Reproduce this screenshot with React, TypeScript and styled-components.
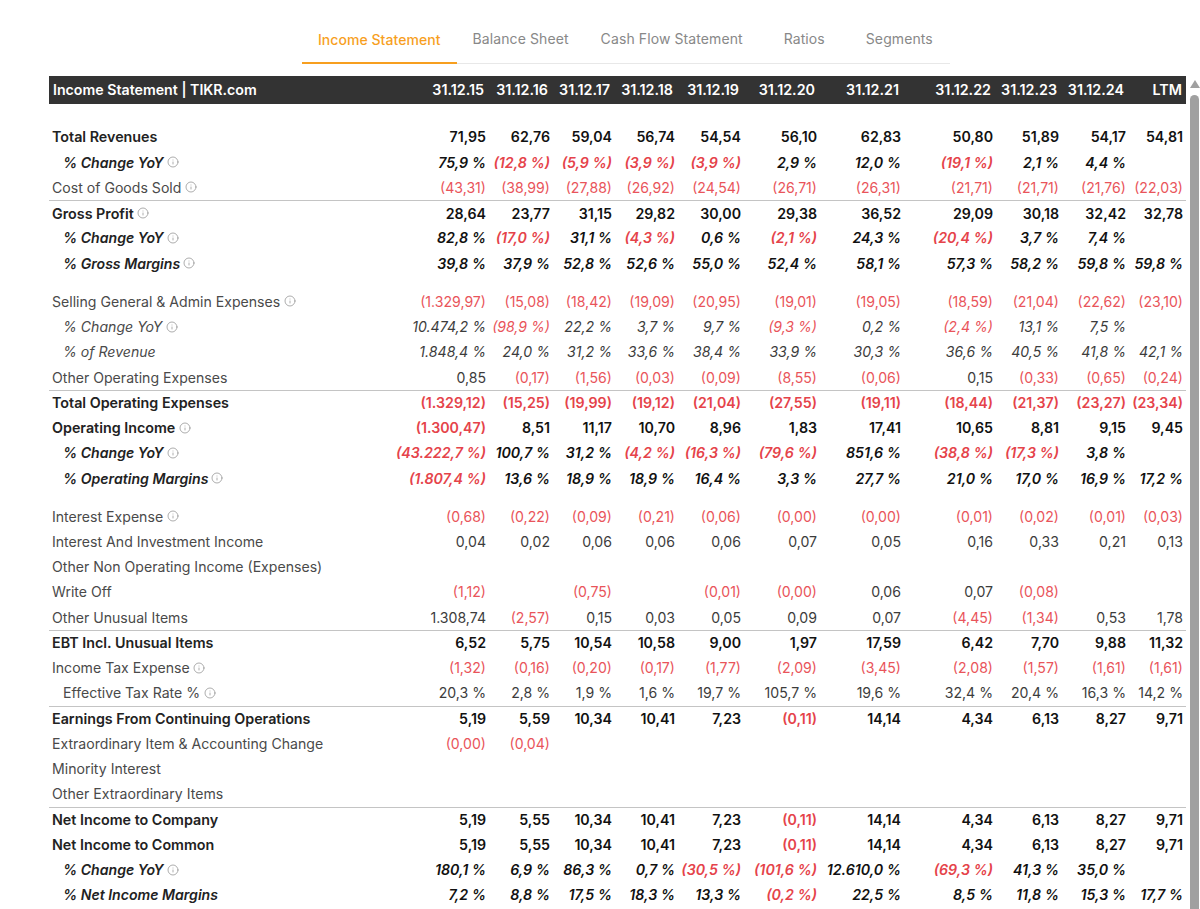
import styled, { createGlobalStyle } from "styled-components";
import { Info } from "lucide-react";

type RowKind = "bold" | "plain" | "italicBold" | "italic";

interface RowData {
  label: string;
  kind: RowKind;
  values: string;
  info?: boolean;
  line?: boolean;
  indent?: boolean;
  gapBefore?: boolean;
}

const GlobalStyle = createGlobalStyle`
  html, body {
    margin: 0;
    height: 909px;
    overflow: hidden;
    background: #fff;
    font-family: Inter, "Liberation Sans", sans-serif;
  }
`;

const COLUMNS = "1fr 66px 64px 62px 63px 66px 76px 84px 92px 66px 67px 57px";

const isBold = (kind: RowKind) => kind === "bold" || kind === "italicBold";
const isItalic = (kind: RowKind) => kind === "italic" || kind === "italicBold";

const Page = styled.div`
  display: grid;
  grid-template-columns: 1137px 11px;
  column-gap: 3px;
  padding: 15px 0 0 49px;
`;

const Tabs = styled.nav`
  grid-column: 1 / -1;
  display: flex;
  width: 648px;
  height: 49px;
  margin-left: 253px;
  margin-bottom: 12px;
  border-bottom: 1px solid #e8e8e8;
  box-sizing: border-box;
`;

const Tab = styled.a<{ $active?: boolean }>`
  min-width: 91px;
  height: 49px;
  padding: ${(p) => (p.$active ? "16px" : "15px")} 16px 0;
  box-sizing: border-box;
  font-size: 14px;
  line-height: 18px;
  font-weight: ${(p) => (p.$active ? 500 : 400)};
  text-align: center;
  white-space: nowrap;
  letter-spacing: ${(p) => (p.$active ? "0.05px" : "0.1px")};
  color: ${(p) => (p.$active ? "#f79f1f" : "#888")};
  border-bottom: ${(p) => (p.$active ? "2px solid #f79f1f" : "none")};
`;

const Table = styled.div`
  display: flex;
  flex-direction: column;
  font-size: 14.1px;
`;

const HeaderRow = styled.div`
  display: grid;
  grid-template-columns: ${COLUMNS};
  align-items: center;
  height: 28px;
  padding-bottom: 2px;
  box-sizing: border-box;
  margin-bottom: 20.5px;
  background: #333;
  color: #fff;
  font-size: 14.3px;
  font-weight: 600;
`;

const HeaderTitle = styled.div`
  padding-left: 4px;
  font-size: 14.2px;
  white-space: nowrap;
`;

const HeaderDate = styled.div`
  display: flex;
  justify-content: flex-end;
  padding-right: 5px;
  white-space: nowrap;
  &:last-child {
    padding-right: 4px;
  }
`;

const Row = styled.div<{ $line?: boolean; $gap?: boolean }>`
  display: grid;
  grid-template-columns: ${COLUMNS};
  align-items: center;
  height: 25.25px;
  padding-bottom: 0.5px;
  box-sizing: border-box;
  margin-top: ${(p) => (p.$gap ? "12.9px" : "0")};
  border-top: ${(p) => (p.$line ? "1px solid #c4c4c4" : "none")};
`;

const Label = styled.div<{ $kind: RowKind; $indent: boolean }>`
  display: flex;
  align-items: center;
  gap: ${(p) => (p.$kind === "italicBold" ? "3px" : "3.5px")};
  padding-left: ${(p) => (p.$indent ? "14px" : "3px")};
  white-space: nowrap;
  color: ${(p) => (isBold(p.$kind) ? "#222" : "#4a4a4a")};
  font-size: ${(p) => (p.$kind === "bold" ? "14.3px" : "14.1px")};
  font-weight: ${(p) => (isBold(p.$kind) ? 600 : 400)};
  font-style: ${(p) => (isItalic(p.$kind) ? "italic" : "normal")};
  svg {
    flex: none;
    color: #8a8a8a;
  }
`;

const Cell = styled.div<{ $kind: RowKind; $negative: boolean }>`
  display: flex;
  justify-content: flex-end;
  padding-right: 3px;
  white-space: nowrap;
  color: ${(p) => (p.$negative ? (isBold(p.$kind) ? "#e5434a" : "#e9545a") : isBold(p.$kind) ? "#111" : "#3c3c3c")};
  font-size: ${(p) => (isBold(p.$kind) ? "14.2px" : "14.1px")};
  font-weight: ${(p) => (isBold(p.$kind) ? 600 : 400)};
  font-style: ${(p) => (isItalic(p.$kind) ? "italic" : "normal")};
`;

const Scrollbar = styled.div`
  display: flex;
  flex-direction: column;
  align-items: center;
  gap: 7px;
  height: 833px;
  padding-top: 4px;
  box-sizing: border-box;
`;

const ScrollArrow = styled.div`
  flex: none;
  width: 0;
  height: 0;
  border-left: 5px solid transparent;
  border-right: 5px solid transparent;
  border-bottom: 8px solid #a0a0a0;
`;

const ScrollThumb = styled.div`
  flex: 1;
  width: 9px;
  border-radius: 5px 5px 0 0;
  background: #a0a0a0;
`;

const TABS = ["Income Statement", "Balance Sheet", "Cash Flow Statement", "Ratios", "Segments"];

const DATES = [
  "31.12.15", "31.12.16", "31.12.17", "31.12.18", "31.12.19", "31.12.20",
  "31.12.21", "31.12.22", "31.12.23", "31.12.24", "LTM",
];

const ROWS: RowData[] = [
  { label: "Total Revenues", kind: "bold", values: "71,95|62,76|59,04|56,74|54,54|56,10|62,83|50,80|51,89|54,17|54,81" },
  { label: "% Change YoY", kind: "italicBold", info: true, indent: true, values: "75,9 %|(12,8 %)|(5,9 %)|(3,9 %)|(3,9 %)|2,9 %|12,0 %|(19,1 %)|2,1 %|4,4 %|" },
  { label: "Cost of Goods Sold", kind: "plain", info: true, values: "(43,31)|(38,99)|(27,88)|(26,92)|(24,54)|(26,71)|(26,31)|(21,71)|(21,71)|(21,76)|(22,03)" },
  { label: "Gross Profit", kind: "bold", info: true, line: true, values: "28,64|23,77|31,15|29,82|30,00|29,38|36,52|29,09|30,18|32,42|32,78" },
  { label: "% Change YoY", kind: "italicBold", info: true, indent: true, values: "82,8 %|(17,0 %)|31,1 %|(4,3 %)|0,6 %|(2,1 %)|24,3 %|(20,4 %)|3,7 %|7,4 %|" },
  { label: "% Gross Margins", kind: "italicBold", info: true, indent: true, values: "39,8 %|37,9 %|52,8 %|52,6 %|55,0 %|52,4 %|58,1 %|57,3 %|58,2 %|59,8 %|59,8 %" },
  { label: "Selling General & Admin Expenses", kind: "plain", info: true, gapBefore: true, values: "(1.329,97)|(15,08)|(18,42)|(19,09)|(20,95)|(19,01)|(19,05)|(18,59)|(21,04)|(22,62)|(23,10)" },
  { label: "% Change YoY", kind: "italic", info: true, indent: true, values: "10.474,2 %|(98,9 %)|22,2 %|3,7 %|9,7 %|(9,3 %)|0,2 %|(2,4 %)|13,1 %|7,5 %|" },
  { label: "% of Revenue", kind: "italic", indent: true, values: "1.848,4 %|24,0 %|31,2 %|33,6 %|38,4 %|33,9 %|30,3 %|36,6 %|40,5 %|41,8 %|42,1 %" },
  { label: "Other Operating Expenses", kind: "plain", values: "0,85|(0,17)|(1,56)|(0,03)|(0,09)|(8,55)|(0,06)|0,15|(0,33)|(0,65)|(0,24)" },
  { label: "Total Operating Expenses", kind: "bold", line: true, values: "(1.329,12)|(15,25)|(19,99)|(19,12)|(21,04)|(27,55)|(19,11)|(18,44)|(21,37)|(23,27)|(23,34)" },
  { label: "Operating Income", kind: "bold", info: true, values: "(1.300,47)|8,51|11,17|10,70|8,96|1,83|17,41|10,65|8,81|9,15|9,45" },
  { label: "% Change YoY", kind: "italicBold", info: true, indent: true, values: "(43.222,7 %)|100,7 %|31,2 %|(4,2 %)|(16,3 %)|(79,6 %)|851,6 %|(38,8 %)|(17,3 %)|3,8 %|" },
  { label: "% Operating Margins", kind: "italicBold", info: true, indent: true, values: "(1.807,4 %)|13,6 %|18,9 %|18,9 %|16,4 %|3,3 %|27,7 %|21,0 %|17,0 %|16,9 %|17,2 %" },
  { label: "Interest Expense", kind: "plain", info: true, gapBefore: true, values: "(0,68)|(0,22)|(0,09)|(0,21)|(0,06)|(0,00)|(0,00)|(0,01)|(0,02)|(0,01)|(0,03)" },
  { label: "Interest And Investment Income", kind: "plain", values: "0,04|0,02|0,06|0,06|0,06|0,07|0,05|0,16|0,33|0,21|0,13" },
  { label: "Other Non Operating Income (Expenses)", kind: "plain", values: "||||||||||" },
  { label: "Write Off", kind: "plain", values: "(1,12)||(0,75)||(0,01)|(0,00)|0,06|0,07|(0,08)||" },
  { label: "Other Unusual Items", kind: "plain", values: "1.308,74|(2,57)|0,15|0,03|0,05|0,09|0,07|(4,45)|(1,34)|0,53|1,78" },
  { label: "EBT Incl. Unusual Items", kind: "bold", line: true, values: "6,52|5,75|10,54|10,58|9,00|1,97|17,59|6,42|7,70|9,88|11,32" },
  { label: "Income Tax Expense", kind: "plain", info: true, values: "(1,32)|(0,16)|(0,20)|(0,17)|(1,77)|(2,09)|(3,45)|(2,08)|(1,57)|(1,61)|(1,61)" },
  { label: "Effective Tax Rate %", kind: "plain", info: true, indent: true, values: "20,3 %|2,8 %|1,9 %|1,6 %|19,7 %|105,7 %|19,6 %|32,4 %|20,4 %|16,3 %|14,2 %" },
  { label: "Earnings From Continuing Operations", kind: "bold", line: true, values: "5,19|5,59|10,34|10,41|7,23|(0,11)|14,14|4,34|6,13|8,27|9,71" },
  { label: "Extraordinary Item & Accounting Change", kind: "plain", values: "(0,00)|(0,04)|||||||||" },
  { label: "Minority Interest", kind: "plain", values: "||||||||||" },
  { label: "Other Extraordinary Items", kind: "plain", values: "||||||||||" },
  { label: "Net Income to Company", kind: "bold", line: true, values: "5,19|5,55|10,34|10,41|7,23|(0,11)|14,14|4,34|6,13|8,27|9,71" },
  { label: "Net Income to Common", kind: "bold", values: "5,19|5,55|10,34|10,41|7,23|(0,11)|14,14|4,34|6,13|8,27|9,71" },
  { label: "% Change YoY", kind: "italicBold", info: true, indent: true, values: "180,1 %|6,9 %|86,3 %|0,7 %|(30,5 %)|(101,6 %)|12.610,0 %|(69,3 %)|41,3 %|35,0 %|" },
  { label: "% Net Income Margins", kind: "italicBold", indent: true, values: "7,2 %|8,8 %|17,5 %|18,3 %|13,3 %|(0,2 %)|22,5 %|8,5 %|11,8 %|15,3 %|17,7 %" },
];

export default function App() {
  return (
    <>
      <GlobalStyle />
      <Page>
        <Tabs>
          {TABS.map((tab, idx) => (
            <Tab key={tab} $active={idx === 0}>
              {tab}
            </Tab>
          ))}
        </Tabs>
        <Table>
          <HeaderRow>
            <HeaderTitle>Income Statement | TIKR.com</HeaderTitle>
            {DATES.map((date) => (
              <HeaderDate key={date}>{date}</HeaderDate>
            ))}
          </HeaderRow>
          {ROWS.map((row, idx) => (
            <Row key={idx} $line={row.line} $gap={row.gapBefore}>
              <Label $kind={row.kind} $indent={!!row.indent}>
                {row.label}
                {row.info && <Info size={12} strokeWidth={1.4} />}
              </Label>
              {row.values.split("|").map((value, col) => (
                <Cell key={col} $kind={row.kind} $negative={value.startsWith("(")}>
                  {value}
                </Cell>
              ))}
            </Row>
          ))}
        </Table>
        <Scrollbar>
          <ScrollArrow />
          <ScrollThumb />
        </Scrollbar>
      </Page>
    </>
  );
}
